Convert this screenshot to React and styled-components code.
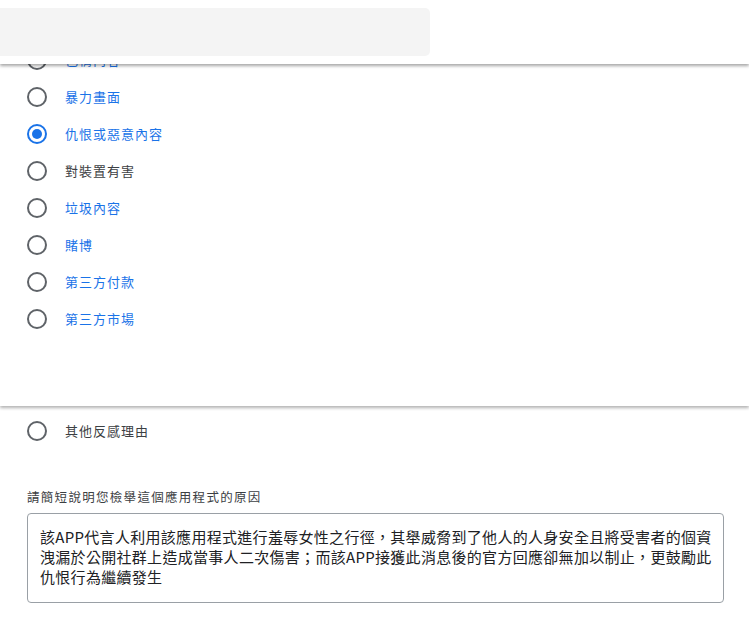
import styled, { createGlobalStyle } from "styled-components";

const GlobalStyle = createGlobalStyle`
  body {
    margin: 0;
    background: #fff;
    font-family: "Noto Sans CJK TC", "Noto Sans", "Liberation Sans", sans-serif;
    color: #202124;
  }
`;

const TopBar = styled.header`
  position: fixed;
  top: 0;
  left: 0;
  right: 0;
  height: 64px;
  background: #fff;
  box-shadow: 0 2px 3px rgba(0, 0, 0, 0.35);
  z-index: 10;
  display: flex;
  align-items: center;
`;

const SearchBox = styled.div`
  width: 430px;
  height: 48px;
  background: #f4f4f4;
  border-radius: 0 5px 5px 0;
`;

const ReasonPanel = styled.section`
  position: relative;
  z-index: 2;
  height: 406px;
  background: #fff;
  padding-top: 41px;
  box-sizing: border-box;
  box-shadow: 0 2px 3px rgba(0, 0, 0, 0.3);
`;

const OtherPanel = styled.section`
  background: #fff;
  padding: 6px 25px 20px 27px;
`;

const Option = styled.label`
  display: flex;
  align-items: center;
  height: 37px;
  padding-left: 27px;
  gap: 18px;
  cursor: pointer;
`;

const Radio = styled.span`
  width: 16px;
  height: 16px;
  border-radius: 50%;
  border: 2px solid ${(p) => (p.checked ? "#1a73e8" : "#5f6368")};
  display: flex;
  align-items: center;
  justify-content: center;
  flex-shrink: 0;

  &::after {
    content: "";
    width: 10px;
    height: 10px;
    border-radius: 50%;
    background: #1a73e8;
    display: ${(p) => (p.checked ? "block" : "none")};
  }
`;

const OptionText = styled.span`
  font-size: 13px;
  letter-spacing: 1px;
  color: ${(p) => (p.link ? "#1a73e8" : "#3c4043")};
`;

const OtherOption = styled(Option)`
  padding-left: 0;
`;

const FieldLabel = styled.div`
  margin-top: 40px;
  font-size: 12.5px;
  letter-spacing: 1.3px;
  color: #3c4043;
  line-height: 16px;
`;

const AnswerBox = styled.div`
  margin-top: 8px;
  height: 90px;
  box-sizing: border-box;
  border: 1px solid #9aa0a6;
  border-radius: 4px;
  padding: 13px 12px;
  font-size: 15px;
  line-height: 20px;
  letter-spacing: 0.3px;
  color: #202124;
`;

const AnswerLine = styled.div`
  white-space: nowrap;
`;

const reasons = [
  { label: "色情內容", link: true },
  { label: "暴力畫面", link: true },
  { label: "仇恨或惡意內容", link: true, checked: true },
  { label: "對裝置有害", link: false },
  { label: "垃圾內容", link: true },
  { label: "賭博", link: true },
  { label: "第三方付款", link: true },
  { label: "第三方市場", link: true },
];

const answer = [
  "該APP代言人利用該應用程式進行羞辱女性之行徑，其舉威脅到了他人的人身安全且將受害者的個資",
  "洩漏於公開社群上造成當事人二次傷害；而該APP接獲此消息後的官方回應卻無加以制止，更鼓勵此",
  "仇恨行為繼續發生",
];

export default function App() {
  return (
    <>
      <GlobalStyle />
      <TopBar>
        <SearchBox />
      </TopBar>
      <ReasonPanel>
        {reasons.map((r) => (
          <Option key={r.label}>
            <Radio checked={r.checked} />
            <OptionText link={r.link}>{r.label}</OptionText>
          </Option>
        ))}
      </ReasonPanel>
      <OtherPanel>
        <OtherOption>
          <Radio />
          <OptionText>其他反感理由</OptionText>
        </OtherOption>
        <FieldLabel>請簡短說明您檢舉這個應用程式的原因</FieldLabel>
        <AnswerBox>
          {answer.map((line) => (
            <AnswerLine key={line}>{line}</AnswerLine>
          ))}
        </AnswerBox>
      </OtherPanel>
    </>
  );
}
